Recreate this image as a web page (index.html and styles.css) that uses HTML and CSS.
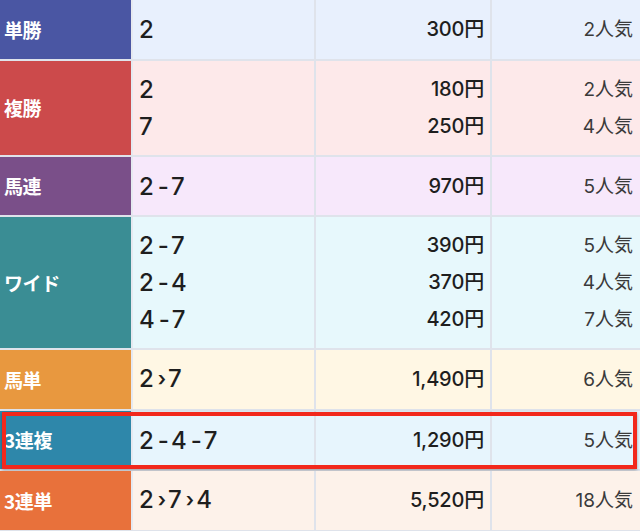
FILE: index.html
```html
<!DOCTYPE html>
<html lang="ja">
<head>
<meta charset="utf-8">
<title>払戻金</title>
<link rel="stylesheet" href="styles.css">
</head>
<body>
<div class="payouts">
  <div class="row row-first tansho">
    <div class="label">単勝</div>
    <div class="cell combo"><span>2</span></div>
    <div class="cell pay"><span>300円</span></div>
    <div class="cell pop"><span>2人気</span></div>
  </div>
  <div class="row fukusho">
    <div class="label">複勝</div>
    <div class="cell combo"><span>2</span><span>7</span></div>
    <div class="cell pay"><span>180円</span><span>250円</span></div>
    <div class="cell pop"><span>2人気</span><span>4人気</span></div>
  </div>
  <div class="row umaren">
    <div class="label">馬連</div>
    <div class="cell combo"><span>2<i class="sep">-</i>7</span></div>
    <div class="cell pay"><span>970円</span></div>
    <div class="cell pop"><span>5人気</span></div>
  </div>
  <div class="row wide">
    <div class="label">ワイド</div>
    <div class="cell combo"><span>2<i class="sep">-</i>7</span><span>2<i class="sep">-</i>4</span><span>4<i class="sep">-</i>7</span></div>
    <div class="cell pay"><span>390円</span><span>370円</span><span>420円</span></div>
    <div class="cell pop"><span>5人気</span><span>4人気</span><span>7人気</span></div>
  </div>
  <div class="row umatan">
    <div class="label">馬単</div>
    <div class="cell combo"><span>2<i class="arrow">›</i>7</span></div>
    <div class="cell pay"><span>1,490円</span></div>
    <div class="cell pop"><span>6人気</span></div>
  </div>
  <div class="row sanrenpuku highlight">
    <div class="label">3連複</div>
    <div class="cell combo"><span>2<i class="sep">-</i>4<i class="sep">-</i>7</span></div>
    <div class="cell pay"><span>1,290円</span></div>
    <div class="cell pop"><span>5人気</span></div>
  </div>
  <div class="row sanrentan">
    <div class="label">3連単</div>
    <div class="cell combo"><span>2<i class="arrow">›</i>7<i class="arrow">›</i>4</span></div>
    <div class="cell pay"><span>5,520円</span></div>
    <div class="cell pop"><span>18人気</span></div>
  </div>
</div>
</body>
</html>
```
FILE: styles.css
```css
* { box-sizing: border-box; }
html, body { margin: 0; padding: 0; background: #ffffff; }
body {
  width: 640px;
  height: 531px;
  overflow: hidden;
  font-family: "Inter", "Noto Sans CJK JP", sans-serif;
  color: #222;
}
.payouts {
  display: flex;
  flex-direction: column;
}
.row {
  position: relative;
  display: grid;
  grid-template-columns: 133px 183px 176px 1fr;
  min-height: 60px;
  border-bottom: 2px solid #dfe3eb;
}
.row-first { min-height: 61px; }
.label {
  display: flex;
  align-items: center;
  padding-left: 4px;
  padding-bottom: 1px;
  border-right: 2px solid #e6e9f0;
  color: #fff;
  font-family: "Noto Sans CJK JP", sans-serif;
  font-weight: 700;
  font-size: 19px;
  letter-spacing: -0.4px;
}
.cell {
  display: flex;
  flex-direction: column;
  justify-content: center;
  padding: 10px 0;
  line-height: 37px;
  border-right: 2px solid #dfe3eb;
}
.cell.pop { border-right: none; }
.combo {
  padding-left: 6px;
  font-size: 24px;
  font-weight: 500;
  color: #1e1e1e;
}
.combo .sep {
  font-style: normal;
  display: inline-block;
  margin: 0 2px 0 4px;
}
.combo .arrow {
  font-style: normal;
  display: inline-block;
  margin: 0 2px 0 4px;
  font-size: 20px;
  font-weight: 600;
  position: relative;
  top: -1px;
}
.pay {
  align-items: flex-end;
  padding-right: 6px;
  font-size: 20px;
  font-weight: 500;
  color: #1e1e1e;
  letter-spacing: -0.2px;
}
.pop {
  align-items: flex-end;
  padding-right: 7px;
  font-size: 19px;
  font-weight: 400;
  color: #3a3a3a;
}

.tansho .label { background: #4a56a3; }
.tansho .cell { background: #e8f0fd; }
.fukusho .label { background: #cc4a4b; }
.fukusho .cell { background: #fde9ea; }
.umaren .label { background: #7a4f89; }
.umaren .cell { background: #f7e8fb; }
.wide .label { background: #3a8d94; }
.wide .cell { background: #e7f8fc; }
.umatan .label { background: #e8983f; }
.umatan .cell { background: #fff7e4; }
.sanrenpuku .label { background: #2e87aa; }
.sanrenpuku .cell { background: #e7f5fd; }
.sanrentan .label { background: #e8713b; }
.sanrentan .cell { background: #fdf2ea; }

.highlight::after {
  content: "";
  position: absolute;
  left: 2px;
  right: 3px;
  top: 1px;
  bottom: 0;
  border: 4px solid #f2281c;
  box-shadow: 0 1px 3px rgba(0, 0, 0, 0.35);
  pointer-events: none;
}
```
